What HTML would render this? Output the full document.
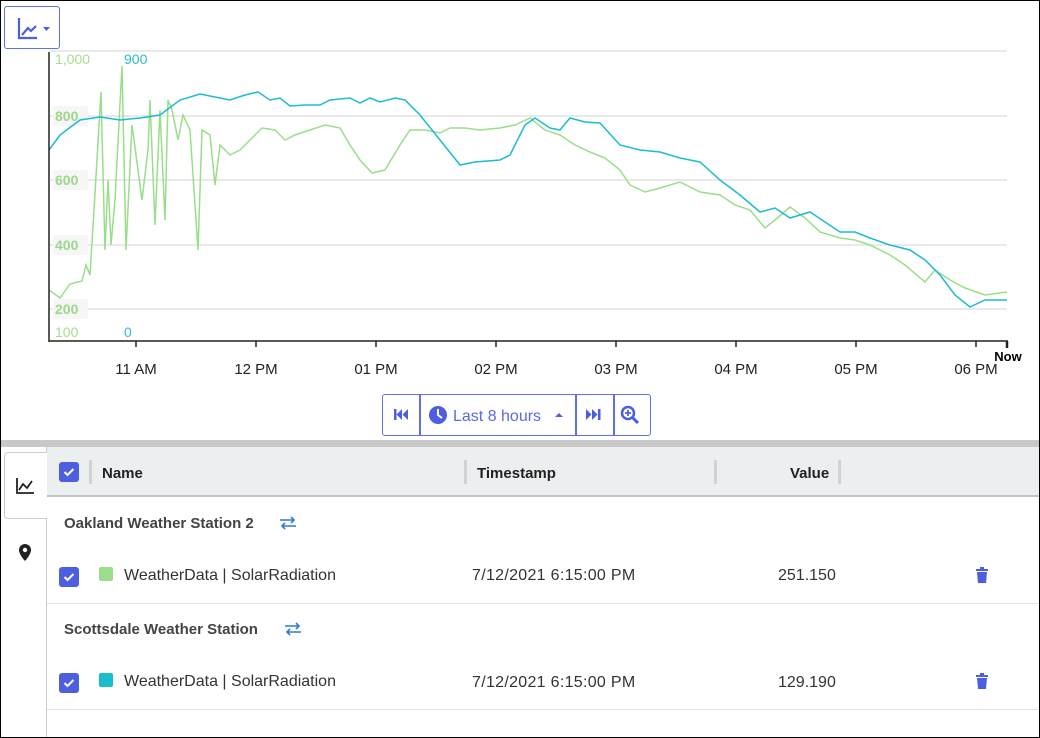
<!DOCTYPE html>
<html><head><meta charset="utf-8"><style>
*{margin:0;padding:0;box-sizing:border-box}
body{width:1040px;height:738px;overflow:hidden;background:#fff;font-family:"Liberation Sans",Arial,sans-serif;position:relative}
.frame{position:absolute;left:0;top:0;width:1040px;height:738px;border:1px solid #000;pointer-events:none;z-index:10}
.a{position:absolute}
.hdr{font-weight:bold;font-size:15px;color:#222}
.sep{position:absolute;width:3px;height:24px;background:#cfd2d6;top:460px}
.cb{position:absolute;width:20px;height:20px;background:#4d5ee0;border-radius:3px}
.cb svg{position:absolute;left:4px;top:5px}
.t{position:absolute;font-size:16px;color:#333}
.g{position:absolute;font-size:15px;font-weight:bold;color:#444}
</style></head><body>
<div class="frame"></div>
<div class="a" style="left:4px;top:6px;width:56px;height:43px;border:1.5px solid #6170e6;border-radius:3px;background:#fff">
<svg width="56" height="43" style="position:absolute;left:-1px;top:-1px"><path d="M15 12v20h18M18 29l6-7 3 3 5-5" fill="none" stroke="#4d5ee0" stroke-width="2.2"/><path d="M39 21h7l-3.5 4z" fill="#4d5ee0"/></svg>
</div>
<svg class="a" style="left:0;top:0" width="1040" height="440">
<g stroke="#e4e4e4" stroke-width="1.5">
<line x1="49" y1="51" x2="1007" y2="51"/><line x1="49" y1="116" x2="1007" y2="116"/><line x1="49" y1="180" x2="1007" y2="180"/><line x1="49" y1="245" x2="1007" y2="245"/><line x1="49" y1="309" x2="1007" y2="309"/>
</g>
<rect x="53" y="106" width="35" height="20" fill="#f6f6f6"/><rect x="53" y="170" width="35" height="20" fill="#f6f6f6"/><rect x="53" y="235" width="35" height="20" fill="#f6f6f6"/><rect x="53" y="299" width="35" height="20" fill="#f6f6f6"/>
<g font-family="Liberation Sans,Arial,sans-serif" font-size="14">
<text x="55" y="64" fill="#a6dd8c">1,000</text><text x="124" y="64" fill="#2cbbd0">900</text>
<g font-weight="bold" fill="#9ad98a"><text x="55" y="121">800</text><text x="55" y="185">600</text><text x="55" y="250">400</text><text x="55" y="314">200</text></g>
<text x="55" y="337" fill="#a6dd8c">100</text><text x="124" y="337" fill="#2cbbd0">0</text>
</g>
<polyline fill="none" stroke="#9ade8b" stroke-width="1.5" points="49,290 60,298 70,284 82,281 86,265 90,275 94,210 101,92 105,250 108,180 111,245 115,200 122,66 126,250 132,125 138,170 142,200 148,150 150,100 155,225 160,110 165,220 168,100 172,110 178,140 183,115 190,130 198,250 202,130 210,135 215,185 220,145 230,155 240,150 250,140 262,128 275,130 285,140 295,135 310,130 325,125 340,128 350,145 360,160 372,173 385,170 400,145 410,130 425,130 440,133 450,128 465,128 480,130 500,128 515,125 530,118 545,130 560,135 575,145 590,152 605,158 620,170 630,185 645,192 660,188 680,182 700,192 720,195 735,205 750,210 765,228 775,220 790,207 805,218 820,232 840,238 855,240 870,245 890,255 905,265 925,282 935,270 950,280 965,288 985,295 1007,292"/>
<polyline fill="none" stroke="#1cbccf" stroke-width="1.5" points="49,150 60,135 80,120 100,117 120,120 140,118 160,115 180,100 200,94 215,97 230,100 245,95 258,92 270,100 280,98 290,106 305,105 320,105 330,100 350,98 360,103 370,98 380,102 395,98 405,100 420,115 440,140 460,165 475,162 500,160 510,155 525,125 535,118 550,128 560,130 570,118 585,122 600,123 620,145 640,150 660,152 680,158 700,162 720,180 740,195 760,212 775,208 790,218 810,212 825,222 840,232 855,232 870,238 890,245 910,250 925,260 940,275 955,295 970,307 985,300 1007,300"/>
<g stroke="#222" stroke-width="1.5"><line x1="49" y1="52" x2="49" y2="342"/><line x1="49" y1="341" x2="1008" y2="341"/>
<line x1="136" y1="341" x2="136" y2="347"/><line x1="256" y1="341" x2="256" y2="347"/><line x1="376" y1="341" x2="376" y2="347"/><line x1="496" y1="341" x2="496" y2="347"/><line x1="616" y1="341" x2="616" y2="347"/><line x1="736" y1="341" x2="736" y2="347"/><line x1="856" y1="341" x2="856" y2="347"/><line x1="976" y1="341" x2="976" y2="347"/><line x1="1007" y1="341" x2="1007" y2="348" stroke-width="2.5"/></g>
<g font-family="Liberation Sans,Arial,sans-serif" font-size="15" fill="#222" text-anchor="middle">
<text x="136" y="374">11 AM</text><text x="256" y="374">12 PM</text><text x="376" y="374">01 PM</text><text x="496" y="374">02 PM</text><text x="616" y="374">03 PM</text><text x="736" y="374">04 PM</text><text x="856" y="374">05 PM</text><text x="976" y="374">06 PM</text>
<text x="1008" y="361" font-weight="bold" font-size="13" fill="#000">Now</text></g>
</svg>
<div class="a" style="left:382px;top:394px;width:269px;height:42px;border:1.5px solid #6170e6;border-radius:3px;background:#fff">
<div class="a" style="left:36px;top:0;width:1.5px;height:40px;background:#6170e6"></div>
<div class="a" style="left:192px;top:0;width:1.5px;height:40px;background:#6170e6"></div>
<div class="a" style="left:230px;top:0;width:1.5px;height:40px;background:#6170e6"></div>
<svg class="a" style="left:0;top:0" width="269" height="40">
<g fill="#4d5ee0"><rect x="11" y="14" width="2.5" height="11"/><path d="M19 14v11l-5.5-5.5zM25 14v11l-5.5-5.5z"/>
<circle cx="55" cy="20" r="9"/><path d="M172 22h8l-4-4z"/>
<path d="M203 14v11l5.5-5.5zM209 14v11l5.5-5.5z"/><rect x="215" y="14" width="2.5" height="11"/>
<circle cx="245" cy="18" r="6" fill="none" stroke="#4d5ee0" stroke-width="2.5"/><path d="M249 22l6 6" stroke="#4d5ee0" stroke-width="3"/><path d="M245 15v6M242 18h6" stroke="#4d5ee0" stroke-width="1.8"/></g>
<path d="M55 14v6l4 3" stroke="#fff" stroke-width="2" fill="none"/>
<text x="70" y="26" font-family="Liberation Sans,Arial,sans-serif" font-size="16" fill="#5b6ae2">Last 8 hours</text>
</svg></div>
<div class="a" style="left:0;top:440px;width:1040px;height:7px;background:#c8c8c8"></div>
<div class="a" style="left:47px;top:447px;width:993px;height:50px;background:#eceff0;border-bottom:2px solid #c0c3c7"></div>
<div class="a" style="left:46px;top:447px;width:1px;height:291px;background:#ccc"></div>
<div class="a" style="left:4px;top:452px;width:43px;height:67px;background:#fff;border:1px solid #ccc;border-right:none;border-radius:4px 0 0 4px"></div>
<svg class="a" style="left:14px;top:476px" width="24" height="20"><path d="M3 2v15h17M5 14l4-6 4 4 5-7" fill="none" stroke="#222" stroke-width="1.8"/></svg>
<svg class="a" style="left:17px;top:543px" width="16" height="20"><path d="M8 1a6 6 0 0 0-6 6c0 4.5 6 11 6 11s6-6.5 6-11a6 6 0 0 0-6-6z" fill="#222"/><circle cx="8" cy="7" r="2.2" fill="#fff"/></svg>
<div class="cb" style="left:59px;top:462px"><svg width="12" height="10"><path d="M1.5 5l3 3 6-6" stroke="#fff" stroke-width="2" fill="none"/></svg></div>
<div class="sep" style="left:89px"></div>
<div class="a hdr" style="left:102px;top:465px">Name</div>
<div class="sep" style="left:464px"></div>
<div class="a hdr" style="left:477px;top:465px">Timestamp</div>
<div class="sep" style="left:714px"></div>
<div class="a hdr" style="left:790px;top:465px">Value</div>
<div class="sep" style="left:838px"></div>
<div class="g" style="left:64px;top:515px">Oakland Weather Station 2</div>
<div class="g" style="left:64px;top:621px">Scottsdale Weather Station</div>
<svg class="a" style="left:278px;top:516px" width="20" height="14"><path d="M2 4h14M13 1l3 3-3 3M18 10H4M7 7l-3 3 3 3" stroke="#2e7cd6" stroke-width="1.6" fill="none"/></svg>
<svg class="a" style="left:283px;top:622px" width="20" height="14"><path d="M2 4h14M13 1l3 3-3 3M18 10H4M7 7l-3 3 3 3" stroke="#2e7cd6" stroke-width="1.6" fill="none"/></svg>
<div class="cb" style="left:59px;top:567px"><svg width="12" height="10"><path d="M1.5 5l3 3 6-6" stroke="#fff" stroke-width="2" fill="none"/></svg></div>
<div class="a" style="left:99px;top:567px;width:14px;height:14px;background:#9ade8b;border-radius:2px"></div>
<div class="t" style="left:124px;top:567px">WeatherData | SolarRadiation</div>
<div class="t" style="left:472px;top:567px;letter-spacing:0.3px">7/12/2021 6:15:00 PM</div>
<div class="t" style="left:778px;top:567px">251.150</div>
<svg class="a" style="left:975px;top:567px" width="14" height="17"><path d="M1 3h12M5 1h4" stroke="#4d5ee0" stroke-width="2"/><path d="M2 5h10l-1 11H3z" fill="#4d5ee0"/></svg>
<div class="a" style="left:47px;top:603px;width:993px;height:1px;background:#e2e2e2"></div>
<div class="cb" style="left:59px;top:673px"><svg width="12" height="10"><path d="M1.5 5l3 3 6-6" stroke="#fff" stroke-width="2" fill="none"/></svg></div>
<div class="a" style="left:99px;top:673px;width:14px;height:14px;background:#1cbccf;border-radius:2px"></div>
<div class="t" style="left:124px;top:673px">WeatherData | SolarRadiation</div>
<div class="t" style="left:472px;top:674px;letter-spacing:0.3px">7/12/2021 6:15:00 PM</div>
<div class="t" style="left:778px;top:674px">129.190</div>
<svg class="a" style="left:975px;top:673px" width="14" height="17"><path d="M1 3h12M5 1h4" stroke="#4d5ee0" stroke-width="2"/><path d="M2 5h10l-1 11H3z" fill="#4d5ee0"/></svg>
<div class="a" style="left:47px;top:709px;width:993px;height:1px;background:#e2e2e2"></div>
</body></html>
